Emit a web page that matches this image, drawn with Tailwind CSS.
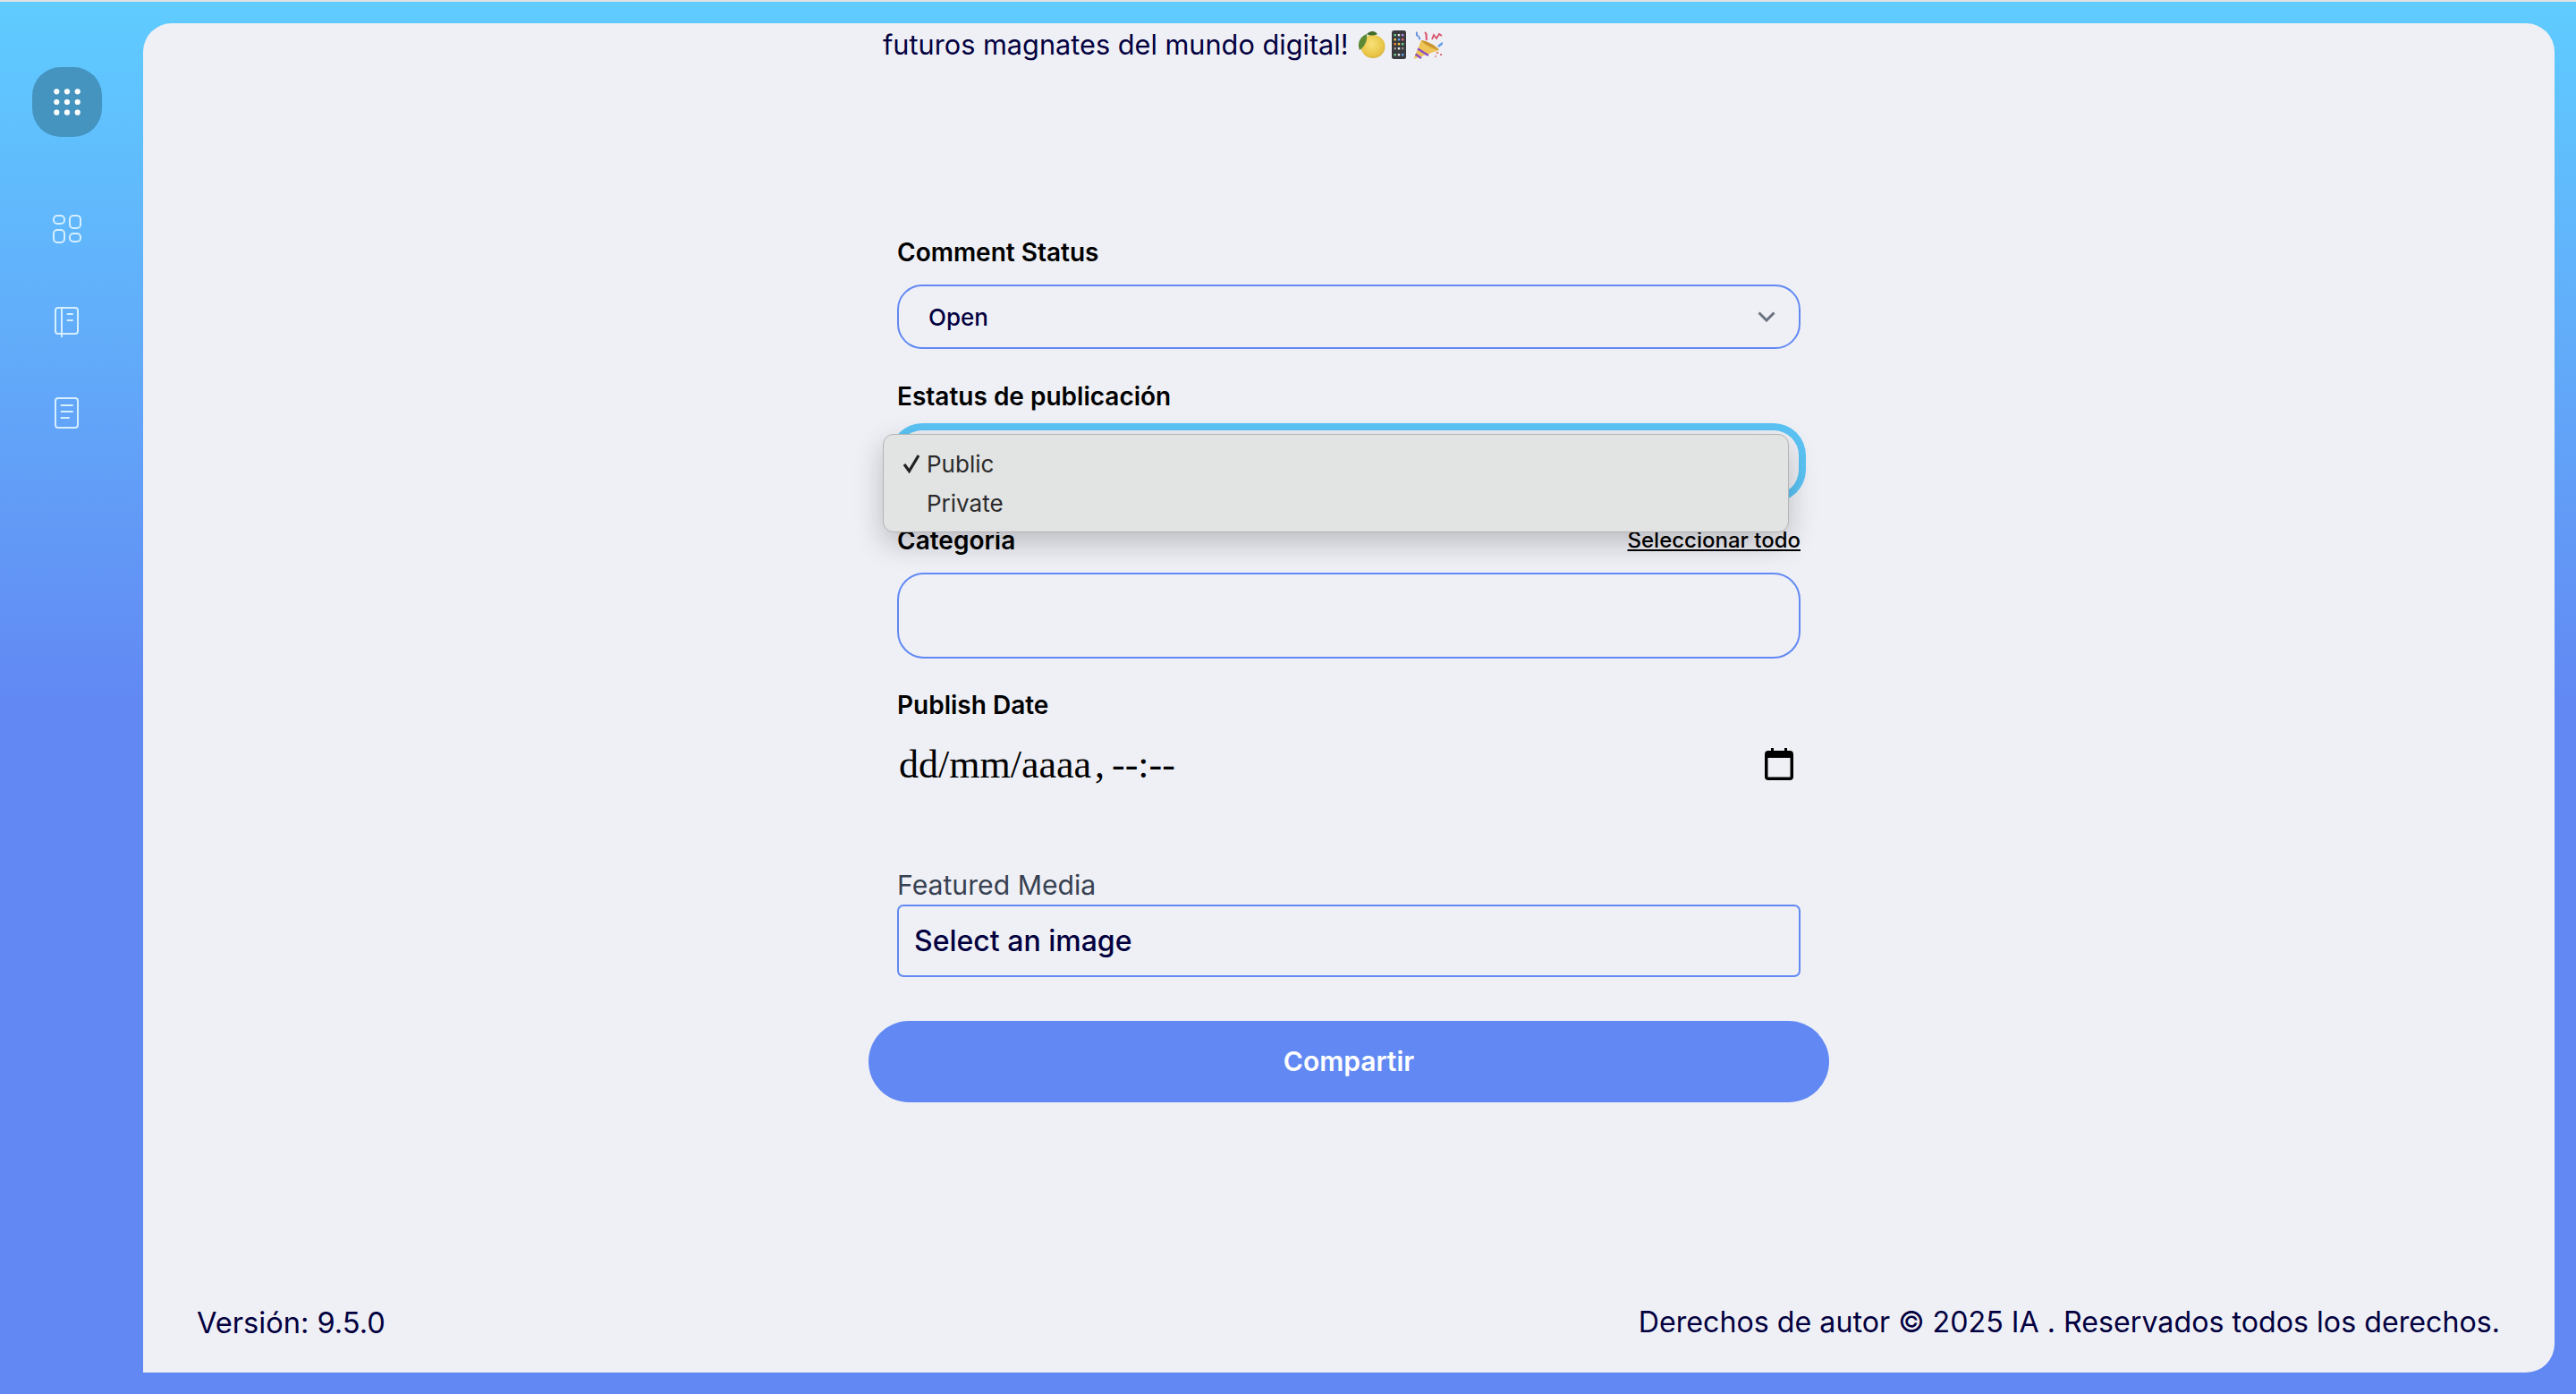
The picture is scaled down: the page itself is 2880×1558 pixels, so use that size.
<!DOCTYPE html>
<html lang="es">
  <head>
    <meta charset="UTF-8" />
    <meta name="viewport" content="width=device-width, initial-scale=1.0" />
    <title>Compartir</title>
    <script src="https://cdn.jsdelivr.net/npm/@tailwindcss/browser@4"></script>
  </head>

  <body class="h-screen overflow-hidden bg-[#e2e2e2] pt-[2px] font-['Inter',sans-serif]">
    <div class="flex h-[1556px] bg-linear-to-b from-[#5fccff] to-[#6289f3] to-50%">
      <!-- Sidebar -->
      <aside class="flex w-[160px] shrink-0 flex-col items-center pt-[73px] pr-[10px]">
        <div class="flex h-[78px] w-[78px] items-center justify-center rounded-[32px] bg-[#4494bf]">
          <svg width="30" height="30" viewBox="0 0 30 30" fill="#fff">
            <circle cx="3.3" cy="3.3" r="3.1" /><circle cx="15" cy="3.3" r="3.1" /><circle cx="26.7" cy="3.3" r="3.1" />
            <circle cx="3.3" cy="15" r="3.1" /><circle cx="15" cy="15" r="3.1" /><circle cx="26.7" cy="15" r="3.1" />
            <circle cx="3.3" cy="26.7" r="3.1" /><circle cx="15" cy="26.7" r="3.1" /><circle cx="26.7" cy="26.7" r="3.1" />
          </svg>
        </div>
        <div class="mt-[83px] flex flex-col gap-[63px]">
          <svg width="40" height="40" viewBox="0 0 40 40" fill="none" stroke="#d5efff" stroke-width="2">
            <rect x="5" y="5" width="12" height="9" rx="4" />
            <rect x="23" y="5" width="12" height="14" rx="4" />
            <rect x="5" y="21" width="12" height="14" rx="4" />
            <rect x="23" y="25" width="12" height="9" rx="4" />
          </svg>
          <svg width="40" height="40" viewBox="0 0 40 40" fill="none" stroke="#d5efff" stroke-width="2">
            <rect x="7" y="5" width="25" height="29" rx="3" />
            <path d="M14 5V38" />
            <path d="M20.5 12H26M20.5 19H26" stroke-linecap="round" />
          </svg>
          <svg width="40" height="40" viewBox="0 0 40 40" fill="none" stroke="#d5efff" stroke-width="2">
            <rect x="7" y="3" width="25" height="33" rx="3" />
            <path d="M13.5 11H26M13.5 18H26M13.5 25H22" stroke-linecap="round" />
          </svg>
        </div>
      </aside>

      <!-- Contenido -->
      <main class="mt-[24px] mb-[24px] mr-[24px] flex flex-1 flex-col rounded-tl-[32px] rounded-tr-[32px] rounded-br-[32px] bg-[#eff0f6]">
        <div class="mx-auto w-[1042px]">
          <div class="flex h-[48px] items-center text-[30.7px] text-[#03003f]">
            <span>futuros magnates del mundo digital!</span>
            <!-- limon -->
            <svg class="ml-[9px]" width="32" height="32" viewBox="0 0 32 32">
              <defs>
                <radialGradient id="lim" cx="0.45" cy="0.4" r="0.7">
                  <stop offset="0" stop-color="#f7e278" /><stop offset="0.7" stop-color="#e8c445" /><stop offset="1" stop-color="#c9a63c" />
                </radialGradient>
              </defs>
              <ellipse cx="18" cy="18" rx="13.5" ry="13" fill="url(#lim)" />
              <path d="M3 22C0 15 3 7 11 4C12 11 9 18 3 22Z" fill="#5b8a34" />
              <path d="M11 4C15 0 20 0 23 4C19 6 14 6 11 4Z" fill="#3f6b2a" />
            </svg>
            <!-- celular -->
            <svg class="ml-[7px]" width="16" height="32" viewBox="0 0 16 32">
              <rect width="16" height="32" rx="2.5" fill="#3a3a3e" />
              <g>
                <rect x="2.5" y="4" width="2.4" height="2.4" fill="#6fd08c" /><rect x="6.8" y="4" width="2.4" height="2.4" fill="#e8e8e8" /><rect x="11" y="4" width="2.4" height="2.4" fill="#b58ae0" />
                <rect x="2.5" y="9" width="2.4" height="2.4" fill="#f6c945" /><rect x="6.8" y="9" width="2.4" height="2.4" fill="#62a8ef" /><rect x="11" y="9" width="2.4" height="2.4" fill="#e86c7a" />
                <rect x="2.5" y="14" width="2.4" height="2.4" fill="#f08a3c" /><rect x="6.8" y="14" width="2.4" height="2.4" fill="#f6c945" /><rect x="11" y="14" width="2.4" height="2.4" fill="#6fd08c" />
                <rect x="2.5" y="19" width="2.4" height="2.4" fill="#9a9a9a" /><rect x="6.8" y="19" width="2.4" height="2.4" fill="#e8e8e8" /><rect x="11" y="19" width="2.4" height="2.4" fill="#8a8a8a" />
                <rect x="2.5" y="26" width="2.4" height="2.4" fill="#6fd08c" /><rect x="6.8" y="26" width="2.4" height="2.4" fill="#e8e8e8" /><rect x="11" y="26" width="2.4" height="2.4" fill="#62a8ef" />
              </g>
            </svg>
            <!-- confeti -->
            <svg class="ml-[8px]" width="33" height="33" viewBox="0 0 33 33" fill="none">
              <path d="M0.5 32L9 11L29 22Z" fill="#eec456" />
              <path d="M9 11C14 11 26 17 29 22C23 21 12 16 9 11Z" fill="#c9962f" />
              <path d="M5 20.5L17 28M2.5 26.5L9 31" stroke="#8d4fc4" stroke-width="2.6" />
              <path d="M28 18L33 14" stroke="#5f9be8" stroke-width="2.4" />
              <path d="M3 2C6 3 2 5 5 6C8 7 5 8 8 10" stroke="#5f8fe0" stroke-width="1.8" />
              <path d="M13 2C16 4 14 7 15 11" stroke="#d9506a" stroke-width="2" />
              <path d="M21 10L23 5L26 9L29 4L32 6" stroke="#d9506a" stroke-width="1.8" />
              <circle cx="27" cy="25" r="1.3" fill="#e08a60" /><circle cx="31" cy="27" r="1.1" fill="#d9506a" /><circle cx="25" cy="29" r="1.2" fill="#e5a0a0" />
            </svg>
          </div>
        </div>

        <form class="mx-auto mt-[190px] flex w-[1010px] flex-col">
          <label class="h-[36px] text-[28px] leading-[36px] font-semibold text-black">Comment Status</label>
          <div class="mt-[18px] flex h-[72px] items-center justify-between rounded-[28px] border-2 border-[#6289f3] pr-[26px] pl-[33px] text-[26px] font-medium text-[#03003f]">
            <span>Open</span>
            <svg width="20" height="12" viewBox="0 0 20 12" fill="none" stroke="#6b7280" stroke-width="3">
              <path d="M1.5 1.5L10 10L18.5 1.5" />
            </svg>
          </div>

          <label class="mt-[35px] h-[36px] text-[28px] leading-[36px] font-semibold text-black">Estatus de publicación</label>
          <div class="relative mt-[20px] mr-[2px] h-[72px] rounded-[28px] ring-[8px] ring-[#5bc4f5]">
            <!-- Menu nativo abierto -->
            <div class="absolute top-[4px] -left-[16px] z-10 flex h-[110px] w-[1013px] flex-col justify-center rounded-[12px] border border-[#b4b4b4] bg-[#e2e3e3] pl-[48px] text-[26px] text-[#2b2b2b] shadow-[0_12px_32px_rgba(0,0,0,0.22)]">
              <div class="relative flex h-[44px] items-center">
                <svg class="absolute top-[11px] -left-[27px]" width="20" height="22" viewBox="0 0 20 22" fill="none" stroke="#222" stroke-width="3.2">
                  <path d="M2 12L7.5 19.5L18 2" />
                </svg>
                Public
              </div>
              <div class="flex h-[44px] items-center">Private</div>
            </div>
          </div>

          <div class="mt-[33px] flex h-[36px] items-center justify-between">
            <label class="text-[28px] leading-[36px] font-semibold text-black">Categoría</label>
            <a class="text-[24px] font-medium text-black underline">Seleccionar todo</a>
          </div>
          <div class="mt-[18px] h-[96px] rounded-[30px] border-2 border-[#6289f3]"></div>

          <label class="mt-[34px] h-[36px] text-[28px] leading-[36px] font-semibold text-black">Publish Date</label>
          <div class="mt-[23px] flex h-[52px] items-center justify-between pr-[8px] pl-[2px] font-['Liberation_Serif',serif] text-[44px] text-black">
            <span>dd/mm/aaaa<span class="mr-[-3px] ml-[4px]">,</span> --:--</span>
            <svg class="mb-[3px]" width="32" height="36" viewBox="0 0 32 36">
              <path d="M7 0H10V3H22V0H25V3H28A4 4 0 0 1 32 7V32A4 4 0 0 1 28 36H4A4 4 0 0 1 0 32V7A4 4 0 0 1 4 3H7ZM3.5 11V32.5H28.5V11Z" fill="#000" fill-rule="evenodd" />
            </svg>
          </div>

          <label class="mt-[88px] h-[40px] text-[30.2px] leading-[40px] text-[#374151]">Featured Media</label>
          <div class="mt-[2px] flex h-[81px] items-center rounded-[7px] border-2 border-[#6289f3] pl-[17px] text-[32px] font-medium text-[#03003f]">Select an image</div>

          <button type="button" class="mt-[49px] -mx-[32px] h-[91px] w-[1074px] rounded-[46px] bg-[#6289f3] text-[30px] font-semibold text-white">Compartir</button>
        </form>

        <!-- Rodape -->
        <footer class="mt-auto flex justify-between pr-[61px] pb-[38px] pl-[60px] leading-[36px] text-[#03003f]">
          <span class="text-[32.6px]">Versión: 9.5.0</span>
          <span class="text-[32.2px]">Derechos de autor © 2025 IA . Reservados todos los derechos.</span>
        </footer>
      </main>
    </div>
  </body>
</html>
